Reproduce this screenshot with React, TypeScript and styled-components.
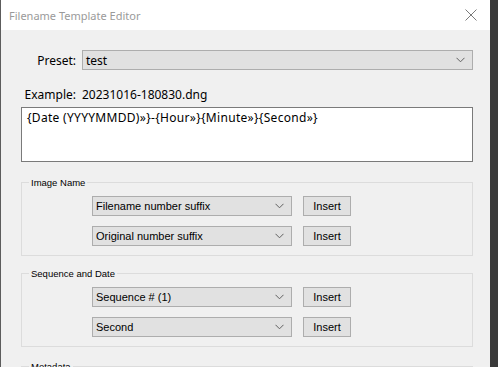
import React from "react";
import styled, { createGlobalStyle } from "styled-components";

const Global = createGlobalStyle`
  html, body { margin: 0; padding: 0; }
  body {
    width: 498px;
    height: 367px;
    overflow: hidden;
    background: #3a3a3a;
    font-family: "Noto Sans", "Open Sans", sans-serif;
  }
`;

const Window = styled.div`
  width: 489px;
  height: 367px;
  border-left: 1px solid #5c5c5c;
  background: #f0f0f0;
  overflow: hidden;
  display: flex;
  flex-direction: column;
`;

const TitleBar = styled.div`
  height: 30px;
  flex: none;
  background: #ffffff;
  display: flex;
  align-items: center;
  justify-content: space-between;
  padding: 0 10px 0 8px;
  color: #9a9a9a;
  font-size: 11px;
`;

const CloseBtn = styled.svg`
  width: 12px;
  height: 12px;
  margin-right: 3px;
`;

const Content = styled.div`
  padding: 20px 17px 0 20px;
  display: flex;
  flex-direction: column;
`;

const FieldRow = styled.div<{ $top?: number }>`
  display: flex;
  align-items: center;
  gap: 6px;
  margin-top: ${(p) => p.$top ?? 0}px;
  font-size: 12px;
  color: #000;
`;

const Label = styled.span`
  width: 55px;
  text-align: right;
  flex: none;
`;

const Select = styled.div<{ $width?: number }>`
  ${(p) => (p.$width ? `width: ${p.$width}px;` : "flex: 1;")}
  height: 20px;
  box-sizing: border-box;
  border: 1px solid #adadad;
  background: #e1e1e1;
  display: flex;
  align-items: center;
  justify-content: space-between;
  padding: 0 7px 0 3px;
  font-family: "Liberation Sans", Arial, sans-serif;
  font-size: 11px;
  color: #000;
`;

const PresetSelect = styled(Select)`
  font-family: "Noto Sans", sans-serif;
  font-size: 12px;
`;

const Chevron = () => (
  <svg width="9" height="6" viewBox="0 0 9 6">
    <path d="M0.5 0.8 L4.5 4.8 L8.5 0.8" fill="none" stroke="#606060" strokeWidth="1" />
  </svg>
);

const TemplateBox = styled.div`
  margin-top: 4px;
  height: 55px;
  box-sizing: border-box;
  border: 1px solid #7a7a7a;
  background: #fff;
  padding: 1px 5px;
  font-size: 12px;
  letter-spacing: 0.3px;
  color: #000;
`;

const Group = styled.div<{ $top: number }>`
  position: relative;
  margin-top: ${(p) => p.$top}px;
  border: 1px solid #dcdcdc;
  padding: 13px 0 9px 70px;
  display: flex;
  flex-direction: column;
  gap: 10px;
`;

const Legend = styled.span`
  position: absolute;
  top: -7px;
  left: 7px;
  padding: 0 2px;
  background: #f0f0f0;
  font-family: "Liberation Sans", Arial, sans-serif;
  font-size: 9.5px;
  line-height: 13px;
  color: #000;
`;

const GroupRow = styled.div`
  display: flex;
  align-items: center;
  gap: 11px;
`;

const Button = styled.div`
  width: 48px;
  height: 20px;
  box-sizing: border-box;
  border: 1px solid #adadad;
  background: #e1e1e1;
  display: flex;
  align-items: center;
  justify-content: center;
  font-family: "Liberation Sans", Arial, sans-serif;
  font-size: 11px;
  color: #000;
`;

const groups = [
  { title: "Image Name", top: 20, rows: ["Filename number suffix", "Original number suffix"] },
  { title: "Sequence and Date", top: 17, rows: ["Sequence # (1)", "Second"] },
  { title: "Metadata", top: 19, rows: [] as string[] },
];

export default function App() {
  return (
    <>
      <Global />
      <Window>
        <TitleBar>
          <span>Filename Template Editor</span>
          <CloseBtn viewBox="0 0 12 12">
            <path d="M0.5 0.5 L11.5 11.5 M11.5 0.5 L0.5 11.5" stroke="#7a7a7a" strokeWidth="1" />
          </CloseBtn>
        </TitleBar>
        <Content>
          <FieldRow>
            <Label>Preset:</Label>
            <PresetSelect>
              <span>test</span>
              <Chevron />
            </PresetSelect>
          </FieldRow>
          <FieldRow $top={16}>
            <Label>Example:</Label>
            <span>20231016-180830.dng</span>
          </FieldRow>
          <TemplateBox>{"{Date (YYYYMMDD)»}-{Hour»}{Minute»}{Second»}"}</TemplateBox>
          {groups.map((g) => (
            <Group key={g.title} $top={g.top}>
              <Legend>{g.title}</Legend>
              {g.rows.map((r) => (
                <GroupRow key={r}>
                  <Select $width={200}>
                    <span>{r}</span>
                    <Chevron />
                  </Select>
                  <Button>Insert</Button>
                </GroupRow>
              ))}
            </Group>
          ))}
        </Content>
      </Window>
    </>
  );
}
